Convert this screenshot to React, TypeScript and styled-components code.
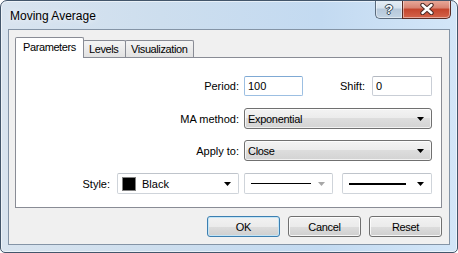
import React from "react";
import styled, { createGlobalStyle } from "styled-components";

const Global = createGlobalStyle`
  html, body { margin: 0; padding: 0; background: #ffffff; }
  body { font-family: "Liberation Sans", Arial, sans-serif; }
  #root { width: 458px; height: 253px; }
  * { box-sizing: border-box; }
`;

const Window = styled.div`
  width: 458px;
  height: 253px;
  border: 1px solid #43566b;
  border-radius: 7px 7px 5px 5px;
  background: linear-gradient(to right, #d9e4ef 0%, #cddeee 35%, #c3daf1 70%, #d3e6f8 100%);
  box-shadow: inset 0 0 0 1px rgba(255, 255, 255, 0.55);
  display: flex;
  flex-direction: column;
  padding: 0 7px 7px 7px;
  overflow: hidden;
`;

const TitleBar = styled.div`
  height: 28px;
  display: flex;
  justify-content: space-between;
  align-items: flex-start;
`;

const TitleText = styled.div`
  margin: 8px 0 0 2px;
  font-family: "Liberation Sans", Arial, sans-serif;
  font-size: 12px;
  line-height: 14px;
  color: #000;
  text-shadow: 0 0 6px rgba(255, 255, 255, 0.9);
`;

const CaptionButtons = styled.div`
  display: flex;
  margin: -1px -1px 0 0;
`;

const CaptionButton = styled.div<{ $kind: "help" | "close" }>`
  height: 19px;
  width: ${(p) => (p.$kind === "help" ? 27 : 49)}px;
  display: flex;
  align-items: center;
  justify-content: center;
  border: 1px solid ${(p) => (p.$kind === "help" ? "#5b6b7d" : "#5a2c24")};
  border-top: none;
  ${(p) => (p.$kind === "help" ? "border-right: none;" : "")}
  border-radius: ${(p) => (p.$kind === "help" ? "0 0 0 5px" : "0 0 5px 0")};
  background: ${(p) =>
    p.$kind === "help"
      ? "linear-gradient(#e6eef6 0%, #d6e2ee 45%, #b6c8da 50%, #c3d4e4 100%)"
      : "linear-gradient(#e9ad9e 0%, #d88270 45%, #c4442c 50%, #d4644a 100%)"};
  box-shadow: inset 0 0 0 1px rgba(255, 255, 255, 0.45);
`;

const HelpGlyph = styled.span`
  font-family: "Liberation Sans", Arial, sans-serif;
  font-weight: bold;
  font-size: 13px;
  line-height: 13px;
  color: #fff;
  margin-top: 1px;
  text-shadow: 0 0 1px #2c3a48, 1px 0 0 #3a4a5a, -1px 0 0 #3a4a5a, 0 1px 0 #3a4a5a, 0 -1px 0 #3a4a5a;
`;

const Client = styled.div`
  flex: 1;
  border: 1px solid #8494a6;
  background: #f0f0f0;
  display: flex;
  flex-direction: column;
  padding: 7px 7px 7px 6px;
`;

const TabStrip = styled.div`
  height: 20px;
  display: flex;
  align-items: flex-end;
  position: relative;
  z-index: 1;
`;

const Tab = styled.div<{ $active?: boolean; $w: number }>`
  width: ${(p) => p.$w}px;
  height: ${(p) => (p.$active ? 21 : 17)}px;
  margin-bottom: ${(p) => (p.$active ? -1 : 0)}px;
  margin-left: ${(p) => (p.$active ? 0 : -1)}px;
  border: 1px solid #898c95;
  border-bottom: none;
  border-radius: 2px 2px 0 0;
  background: ${(p) => (p.$active ? "#ffffff" : "linear-gradient(#f4f4f4, #e2e2e2)")};
  position: relative;
  z-index: ${(p) => (p.$active ? 2 : 1)};
  font-size: 11px;
  letter-spacing: -0.4px;
  color: #000;
  display: flex;
  align-items: center;
  padding-left: ${(p) => (p.$active ? 7 : 5)}px;
  padding-bottom: ${(p) => (p.$active ? 2 : 0)}px;
  &:first-child { margin-left: 0; }
`;

const Panel = styled.div`
  height: 151px;
  border: 1px solid #898c95;
  background: #ffffff;
  display: flex;
  flex-direction: column;
  padding: 17px 9px 0 0;
`;

const Row = styled.div<{ $mt?: number }>`
  display: flex;
  align-items: center;
  height: 21px;
  margin-top: ${(p) => p.$mt ?? 0}px;
`;

const Label = styled.div<{ $w?: number; $gap: number }>`
  ${(p) => (p.$w ? `width: ${p.$w}px;` : "flex: 1;")}
  text-align: right;
  font-size: 11px;
  color: #000;
  margin-right: ${(p) => p.$gap}px;
  white-space: nowrap;
`;

const TextInput = styled.input<{ $w: number; $focus?: boolean }>`
  width: ${(p) => p.$w}px;
  height: 20px;
  margin: 0;
  padding: 0 0 0 3px;
  border: 1px solid ${(p) => (p.$focus ? "#9cbfe2" : "#c9ced6")};
  border-top-color: ${(p) => (p.$focus ? "#7fa9d4" : "#b3b8c0")};
  border-radius: 2px;
  background: #ffffff;
  font-family: "Liberation Sans", Arial, sans-serif;
  font-size: 11px;
  color: #000;
  outline: none;
`;

const DropList = styled.div<{ $w: number }>`
  width: ${(p) => p.$w}px;
  height: 21px;
  border: 1px solid #707070;
  border-radius: 3px;
  background: linear-gradient(#f3f3f3 0%, #ebebeb 50%, #dddddd 50%, #d3d3d3 100%);
  box-shadow: inset 0 0 0 1px rgba(255, 255, 255, 0.7);
  display: flex;
  align-items: center;
  padding: 0 7px 0 3px;
  font-size: 11px;
  letter-spacing: -0.3px;
  color: #000;
`;

const ComboBox = styled.div<{ $w: number; $ml?: number }>`
  width: ${(p) => p.$w}px;
  height: 21px;
  margin-left: ${(p) => p.$ml ?? 0}px;
  border: 1px solid #cfd4da;
  border-top-color: #bfc4cb;
  border-radius: 2px;
  background: #ffffff;
  display: flex;
  align-items: center;
  padding: 0 7px 0 4px;
  font-size: 11px;
  color: #000;
`;

const ComboValue = styled.div`
  flex: 1;
  display: flex;
  align-items: center;
  gap: 6px;
`;

const Swatch = styled.div<{ $color: string }>`
  width: 14px;
  height: 14px;
  background: ${(p) => p.$color};
  border: 1px solid #808080;
`;

const LineSample = styled.div<{ $thick: number; $w: number }>`
  width: ${(p) => p.$w}px;
  height: ${(p) => p.$thick}px;
  background: #000;
  margin-left: 2px;
`;

const ArrowSvg = styled.svg`
  flex: none;
`;

const Arrow = ({ color = "#000" }: { color?: string }) => (
  <ArrowSvg width="7" height="4" viewBox="0 0 7 4">
    <path d="M0 0 H7 L3.5 4 Z" fill={color} />
  </ArrowSvg>
);

const ButtonRow = styled.div`
  margin-top: 8px;
  height: 21px;
  display: flex;
  justify-content: flex-end;
  gap: 8px;
`;

const Button = styled.div<{ $default?: boolean }>`
  width: 73px;
  height: 21px;
  border: 1px solid ${(p) => (p.$default ? "#3c7fb1" : "#707070")};
  border-radius: 3px;
  background: linear-gradient(#f2f2f2 0%, #ebebeb 50%, #dddddd 50%, #cfcfcf 100%);
  box-shadow: inset 0 0 0 1px ${(p) => (p.$default ? "#c4e5f6" : "rgba(255,255,255,0.8)")};
  display: flex;
  align-items: center;
  justify-content: center;
  font-size: 11px;
  letter-spacing: -0.3px;
  color: #000;
`;

export default function App() {
  return (
    <>
      <Global />
      <Window>
        <TitleBar>
          <TitleText>Moving Average</TitleText>
          <CaptionButtons>
            <CaptionButton $kind="help">
              <HelpGlyph>?</HelpGlyph>
            </CaptionButton>
            <CaptionButton $kind="close">
              <svg width="14" height="12" viewBox="0 0 14 12">
                <path d="M2.5 2 L11.5 10 M11.5 2 L2.5 10" stroke="#4a2a26" strokeWidth="4.4" strokeLinecap="round" />
                <path d="M2.5 2 L11.5 10 M11.5 2 L2.5 10" stroke="#ffffff" strokeWidth="2.4" strokeLinecap="round" />
              </svg>
            </CaptionButton>
          </CaptionButtons>
        </TitleBar>
        <Client>
          <TabStrip>
            <Tab $active $w={69}>Parameters</Tab>
            <Tab $w={43}>Levels</Tab>
            <Tab $w={69}>Visualization</Tab>
          </TabStrip>
          <Panel>
            <Row>
              <Label $gap={5}>Period:</Label>
              <TextInput $w={59} $focus readOnly value="100" />
              <Label $w={62} $gap={7}>Shift:</Label>
              <TextInput $w={60} readOnly value="0" />
            </Row>
            <Row $mt={12}>
              <Label $gap={5}>MA method:</Label>
              <DropList $w={188}>
                <ComboValue>Exponential</ComboValue>
                <Arrow />
              </DropList>
            </Row>
            <Row $mt={11}>
              <Label $gap={5}>Apply to:</Label>
              <DropList $w={188}>
                <ComboValue>Close</ComboValue>
                <Arrow />
              </DropList>
            </Row>
            <Row $mt={12}>
              <Label $gap={7}>Style:</Label>
              <ComboBox $w={122}>
                <ComboValue>
                  <Swatch $color="#000000" />
                  Black
                </ComboValue>
                <Arrow />
              </ComboBox>
              <ComboBox $w={89} $ml={5}>
                <ComboValue>
                  <LineSample $thick={1} $w={60} />
                </ComboValue>
                <Arrow color="#a7a7a7" />
              </ComboBox>
              <ComboBox $w={90} $ml={9}>
                <ComboValue>
                  <LineSample $thick={2} $w={57} />
                </ComboValue>
                <Arrow />
              </ComboBox>
            </Row>
          </Panel>
          <ButtonRow>
            <Button $default>OK</Button>
            <Button>Cancel</Button>
            <Button>Reset</Button>
          </ButtonRow>
        </Client>
      </Window>
    </>
  );
}
